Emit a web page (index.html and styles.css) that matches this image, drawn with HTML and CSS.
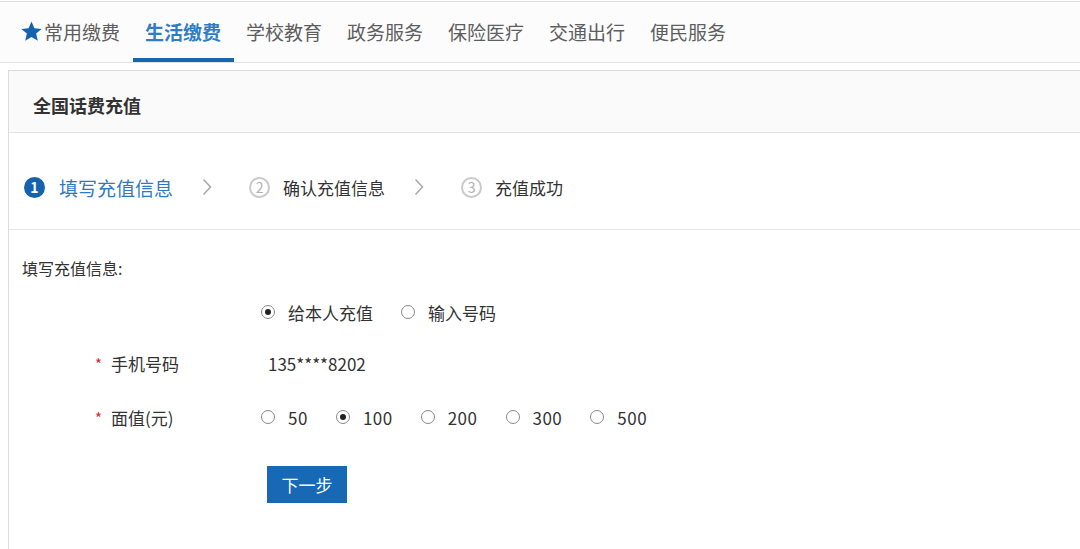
FILE: index.html
```html
<!DOCTYPE html>
<html lang="zh-CN">
<head>
<meta charset="utf-8">
<title>全国话费充值</title>
<link rel="stylesheet" href="styles.css">
</head>
<body>
<nav class="nav">
  <a class="nav-item first"><svg class="star" viewBox="0 0 24 24" width="21" height="21"><path d="M12 0.6l3.3 7.7 8.3.7-6.3 5.4 1.9 8.2L12 18.3l-7.2 4.3 1.9-8.2L0.4 9l8.3-.7z" fill="#1563ae"/></svg>常用缴费</a>
  <a class="nav-item active">生活缴费</a>
  <a class="nav-item">学校教育</a>
  <a class="nav-item">政务服务</a>
  <a class="nav-item">保险医疗</a>
  <a class="nav-item">交通出行</a>
  <a class="nav-item">便民服务</a>
</nav>
<section class="panel">
  <header class="panel-head">全国话费充值</header>
  <div class="steps">
    <div class="step current"><span class="num">1</span><span class="step-text">填写充值信息</span></div>
    <svg class="chev" viewBox="0 0 10 18" width="10" height="18"><polyline points="1.5,1.5 8.5,9 1.5,16.5" fill="none" stroke="#aaa" stroke-width="1.6"/></svg>
    <div class="step"><span class="num">2</span><span class="step-text">确认充值信息</span></div>
    <svg class="chev" viewBox="0 0 10 18" width="10" height="18"><polyline points="1.5,1.5 8.5,9 1.5,16.5" fill="none" stroke="#aaa" stroke-width="1.6"/></svg>
    <div class="step"><span class="num">3</span><span class="step-text">充值成功</span></div>
  </div>
  <div class="form">
    <div class="form-title">填写充值信息:</div>
    <div class="row row-who">
      <div class="label"></div>
      <div class="value">
        <span class="opt"><span class="radio checked"></span>给本人充值</span>
        <span class="opt"><span class="radio"></span>输入号码</span>
      </div>
    </div>
    <div class="row row-phone">
      <div class="label"><span class="req">*</span>手机号码</div>
      <div class="value phone">135****8202</div>
    </div>
    <div class="row row-amount">
      <div class="label"><span class="req">*</span>面值(元)</div>
      <div class="value">
        <span class="opt"><span class="radio"></span>50</span>
        <span class="opt"><span class="radio checked"></span>100</span>
        <span class="opt"><span class="radio"></span>200</span>
        <span class="opt"><span class="radio"></span>300</span>
        <span class="opt"><span class="radio"></span>500</span>
      </div>
    </div>
    <div class="row row-btn">
      <div class="label"></div>
      <div class="value"><button class="btn">下一步</button></div>
    </div>
  </div>
</section>
</body>
</html>
```
FILE: styles.css
```css
* { box-sizing: border-box; }
html, body {
  margin: 0;
  padding: 0;
  background: #fff;
  font-family: "Noto Sans CJK SC", "Noto Sans", sans-serif;
  color: #333;
  overflow: hidden;
}
body { padding-top: 1px; height: 549px; }

.nav {
  display: flex;
  height: 62px;
  padding-left: 9px;
  background: #fcfcfc;
  border-top: 1px solid #dedede;
  border-bottom: 1px solid #e2e2e2;
}
.nav-item {
  display: flex;
  align-items: center;
  height: 60px;
  padding: 2px 12.5px 0;
  font-size: 19px;
  color: #5e5e5e;
  border-bottom: 4px solid transparent;
  cursor: pointer;
}
.nav-item.first { padding-left: 12px; }
.nav-item .star { margin-right: 2px; flex-shrink: 0; }
.nav-item.active {
  color: #2f7dc4;
  font-weight: 700;
  border-bottom-color: #1766ae;
}

.panel {
  margin: 7px 0 0 8px;
  border-top: 1px solid #dcdcdc;
  border-left: 1px solid #dcdcdc;
  height: 479px;
  overflow: hidden;
}
.panel-head {
  height: 62px;
  display: flex;
  align-items: center;
  padding-left: 24px;
  padding-top: 6px;
  background: #fafafa;
  border-bottom: 1px solid #e2e2e2;
  font-size: 18px;
  font-weight: 700;
  color: #333;
}

.steps {
  display: flex;
  align-items: center;
  height: 97px;
  padding: 12px 0 0 15px;
  border-bottom: 1px solid #e6e6e6;
}
.step { display: flex; align-items: center; }
.num {
  flex: 0 0 21px;
  width: 21px;
  height: 21px;
  border-radius: 50%;
  border: 2px solid #cacaca;
  color: #b0b0b0;
  font-size: 14px;
  line-height: 1;
  display: flex;
  align-items: center;
  justify-content: center;
  margin-right: 13px;
}
.step-text { font-size: 17px; color: #333; }
.step.current .num {
  background: #1563ae;
  border-color: #1563ae;
  color: #fff;
  font-weight: 700;
  margin-right: 14px;
}
.step.current .step-text { font-size: 19px; color: #3179bf; }
.chev { margin: 0 37px 0 29px; flex-shrink: 0; }

.form {
  display: flex;
  flex-direction: column;
  padding: 26px 0 0 13px;
}
.form-title { font-size: 16px; line-height: 24px; height: 24px; color: #333; }
.row {
  display: grid;
  grid-template-columns: 239px 1fr;
  align-items: center;
  height: 30px;
  font-size: 17px;
}
.row-who { margin-top: 17px; }
.row-phone { margin-top: 21px; }
.row-amount { margin-top: 24px; }
.row-btn { margin-top: 34px; height: 37px; }
.label { padding-left: 73px; display: flex; align-items: center; color: #333; }
.req { color: #e0262b; width: 16px; font-size: 15px; }
.value { display: flex; align-items: center; color: #333; }
.phone { padding-left: 7px; }
.opt { display: inline-flex; align-items: center; margin-right: 28px; }
.row-amount .opt { letter-spacing: 0.5px; }
.radio {
  flex: 0 0 14px;
  width: 14px;
  height: 14px;
  border-radius: 50%;
  border: 1.3px solid #8a8a8a;
  margin-right: 13px;
  position: relative;
  background: #fff;
}
.radio.checked::after {
  content: "";
  position: absolute;
  left: 2.7px;
  top: 2.7px;
  width: 6px;
  height: 6px;
  border-radius: 50%;
  background: #222;
}
.btn {
  margin-left: 6px;
  width: 80px;
  height: 37px;
  border: 0;
  background: #1769b6;
  color: #fff;
  font-family: "Noto Sans CJK SC", sans-serif;
  font-size: 17px;
  padding: 0;
}
```
